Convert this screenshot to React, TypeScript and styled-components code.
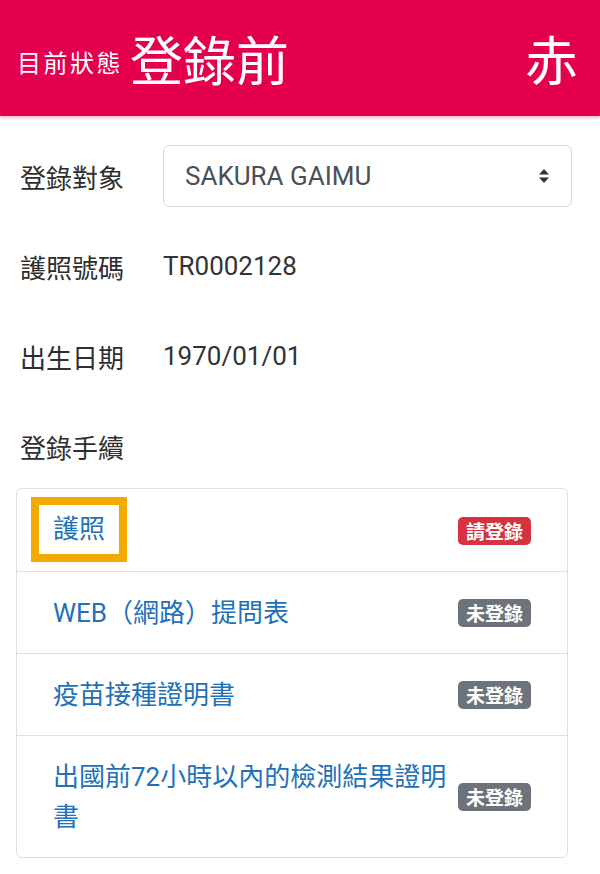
import styled, { createGlobalStyle } from 'styled-components';

const GlobalStyle = createGlobalStyle`
  body {
    margin: 0;
    background: #fff;
    font-family: Roboto, "Noto Sans CJK TC", sans-serif;
    color: #333;
  }
`;

const items = [
  { label: '護照', status: '請登錄', highlight: true },
  { label: 'WEB（網路）提問表', status: '未登錄' },
  { label: '疫苗接種證明書', status: '未登錄' },
  { label: '出國前72小時以內的檢測結果證明書', status: '未登錄' },
];

export default function App() {
  return (
    <>
      <GlobalStyle />
      <Header>
        <StatusLabel>目前狀態</StatusLabel>
        <StatusValue>登錄前</StatusValue>
        <StatusColor>赤</StatusColor>
      </Header>

      <Form>
        <Row>
          <Label>登錄對象</Label>
          <Select>
            <span>SAKURA GAIMU</span>
            <svg width="12" height="16" viewBox="0 0 12 16">
              <path d="M6 1 L11 6.5 H1 Z" fill="#333" />
              <path d="M6 15 L11 9.5 H1 Z" fill="#333" />
            </svg>
          </Select>
        </Row>
        <Row>
          <Label>護照號碼</Label>
          <Value>TR0002128</Value>
        </Row>
        <Row>
          <Label>出生日期</Label>
          <Value>1970/01/01</Value>
        </Row>
        <Row>
          <Label>登錄手續</Label>
        </Row>
      </Form>

      <List>
        {items.map((item) => (
          <Item key={item.label}>
            <ItemText $highlight={item.highlight}>{item.label}</ItemText>
            <Badge $danger={item.status === '請登錄'}>{item.status}</Badge>
          </Item>
        ))}
      </List>
    </>
  );
}

const Header = styled.header`
  height: 116px;
  background: #e4004f;
  box-shadow: 0 2px 3px rgba(120, 0, 40, 0.25);
  display: flex;
  align-items: center;
  padding: 0 22px 0 17px;
  color: #fff;
  font-family: "Noto Sans CJK TC", sans-serif;
`;

const StatusLabel = styled.span`
  font-size: 24px;
  margin-top: 6px;
  margin-right: 7px;
  letter-spacing: 2.5px;
`;

const StatusValue = styled.span`
  font-size: 53px;
  flex: 1;
`;

const StatusColor = styled.span`
  font-size: 53px;
`;

const Form = styled.div`
  display: flex;
  flex-direction: column;
  gap: 28px;
  padding: 29px 28px 0 20px;
`;

const Row = styled.div`
  height: 62px;
  display: flex;
  align-items: center;
`;

const Label = styled.div`
  width: 143px;
  flex-shrink: 0;
  font-size: 26px;
  font-family: "Noto Sans CJK TC", sans-serif;
  color: #2e2e2e;
`;

const Value = styled.div`
  font-size: 26px;
  color: #333;
`;

const Select = styled.div`
  flex: 1;
  height: 62px;
  box-sizing: border-box;
  border: 1px solid #d6d9dc;
  border-radius: 6px;
  display: flex;
  align-items: center;
  justify-content: space-between;
  padding: 0 21px 0 21px;
  font-size: 26px;
  color: #495057;
`;

const List = styled.div`
  margin: 11px 32px 0 16px;
  border: 1px solid #dfdfdf;
  border-radius: 6px;
`;

const Item = styled.div`
  display: flex;
  align-items: center;
  padding: 21px 36px 20px 36px;
  border-bottom: 1px solid #dfdfdf;

  &:last-child {
    border-bottom: none;
  }
`;

const ItemText = styled.div<{ $highlight?: boolean }>`
  flex: 1;
  font-size: 26px;
  line-height: 40px;
  color: #2271b8;
  font-family: Roboto, "Noto Sans CJK TC", sans-serif;

  ${({ $highlight }) =>
    $highlight &&
    `
    flex: 0 0 auto;
    margin: -13px auto -11px -22px;
    padding: 4px 14px 5px 14px;
    border: 8px solid #f2a900;
  `}
`;

const Badge = styled.span<{ $danger?: boolean }>`
  flex-shrink: 0;
  height: 28px;
  line-height: 28px;
  padding: 0 8px;
  border-radius: 5px;
  background: ${({ $danger }) => ($danger ? '#d7323f' : '#6c737a')};
  color: #fff;
  font-size: 19px;
  font-weight: bold;
  font-family: "Noto Sans CJK TC", sans-serif;
`;
